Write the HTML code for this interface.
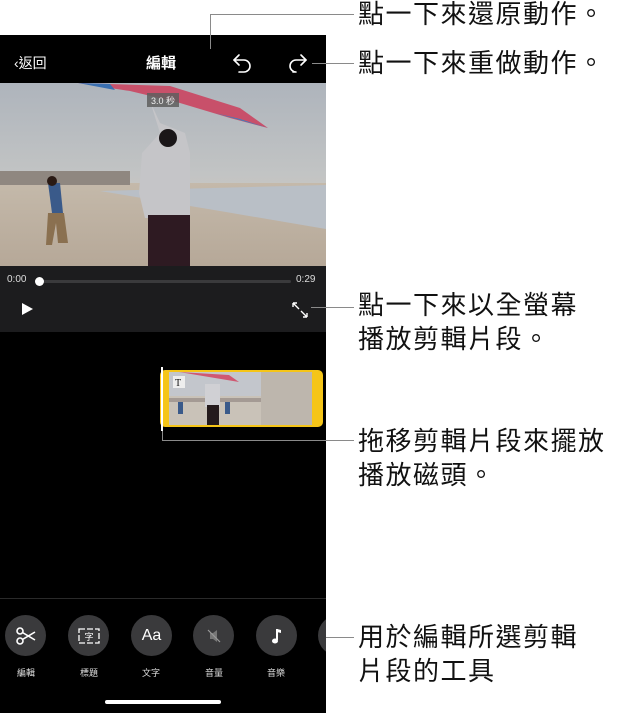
<!DOCTYPE html>
<html><head><meta charset="utf-8"><style>
*{margin:0;padding:0;box-sizing:border-box}
body{width:617px;height:713px;background:#fff;position:relative;overflow:hidden;font-family:"Liberation Sans","Noto Sans CJK TC",sans-serif}
.abs{position:absolute}
.ann{position:absolute;left:358px;font-size:26px;color:#111;line-height:34px;letter-spacing:1.5px;white-space:nowrap}
.ln{position:absolute;background:#8a8a8a}
.tool{position:absolute;top:615px;width:41px;height:41px;border-radius:50%;background:#3a3a3c;color:#fff;display:flex;align-items:center;justify-content:center}
.tl{position:absolute;top:666px;font-size:9px;color:#ddd;width:40px;text-align:center}
</style></head><body>
<div class="abs" style="left:0;top:35px;width:326px;height:678px;background:#000"></div>
<div class="abs" style="left:14px;top:53px;color:#fff;font-size:14px">‹返回</div>
<div class="abs" style="left:146px;top:52px;color:#fff;font-size:15px;font-weight:bold">編輯</div>
<svg class="abs" style="left:230px;top:50px" width="80" height="26" viewBox="0 0 80 26">
<g fill="none" stroke="#fff" stroke-width="1.6" stroke-linecap="round" stroke-linejoin="round">
<path d="M9 5 L4 10 L9 15"/><path d="M4 10 H14 a6 6 0 0 1 0 12 H9"/>
<path d="M71 5 L76 10 L71 15"/><path d="M76 10 H66 a6 6 0 0 0 0 12 H63"/>
</g></svg>
<svg class="abs" style="left:0;top:83px" width="326" height="183" viewBox="0 0 326 183">
<defs><linearGradient id="sky" x1="0" y1="0" x2="0" y2="1"><stop offset="0" stop-color="#aeb4bc"/><stop offset="0.5" stop-color="#c2c4c4"/><stop offset="1" stop-color="#e0cdb5"/></linearGradient>
<linearGradient id="sand" x1="0" y1="0" x2="0" y2="1"><stop offset="0" stop-color="#c4b9aa"/><stop offset="1" stop-color="#b6a898"/></linearGradient></defs>
<rect width="326" height="183" fill="url(#sky)"/>
<rect y="100" width="326" height="83" fill="url(#sand)"/>
<rect y="88" width="130" height="14" fill="#8f8780"/>
<path d="M100 108 L326 102 L326 146 L220 128 Z" fill="#b9bfc6"/>
<path d="M78 0 L170 3 L240 25 L268 45 L230 35 L180 20 L130 8 Z" fill="#c8506a"/>
<path d="M78 0 L110 1 L115 7 Z" fill="#3a6fb0"/>
<path d="M215 30 L268 45 L240 36 Z" fill="#3a80c0"/>
<path d="M150 18 L160 40 L185 50 L190 70 L190 135 L145 135 L139 110 L142 70 L160 50 Z" fill="#c5c5c8"/>
<circle cx="168" cy="55" r="9" fill="#1a1618"/>
<rect x="148" y="132" width="42" height="51" fill="#2e1a22"/>
<path d="M48 100 L60 100 L63 130 L52 130 Z" fill="#3a5a8a"/>
<circle cx="52" cy="98" r="5" fill="#2a1a14"/>
<path d="M48 130 L64 130 L68 160 L58 160 L56 140 L52 162 L46 162 Z" fill="#8a7050"/>
<rect x="147" y="10" width="32" height="14" fill="#5e5e5e" opacity="0.85"/>
<text x="163" y="21" fill="#eee" font-size="9" text-anchor="middle" font-family="Liberation Sans,Noto Sans CJK TC,sans-serif">3.0 秒</text>
</svg>
<div class="abs" style="left:0;top:266px;width:326px;height:66px;background:#1c1c1e"></div>
<div class="abs" style="left:7px;top:274px;color:#ddd;font-size:10px">0:00</div>
<div class="abs" style="left:296px;top:274px;color:#ddd;font-size:10px">0:29</div>
<div class="abs" style="left:40px;top:280px;width:251px;height:3px;background:#3a3a3c;border-radius:2px"></div>
<div class="abs" style="left:35px;top:277px;width:9px;height:9px;background:#fff;border-radius:50%"></div>
<div class="abs" style="left:22px;top:303px;width:0;height:0;border-left:11px solid #fff;border-top:6.5px solid transparent;border-bottom:6.5px solid transparent"></div>
<svg class="abs" style="left:291px;top:301px" width="18" height="18"><g stroke="#fff" stroke-width="1.4" fill="none"><path d="M2 2 L8 8 M2 2 H6 M2 2 V6 M16 16 L10 10 M16 16 H12 M16 16 V12"/></g></svg>
<div class="abs" style="left:160px;top:370px;width:163px;height:57px;background:#f5c518;border-radius:5px"></div>
<svg class="abs" style="left:169px;top:372px" width="143" height="53" viewBox="0 0 143 53">
<rect width="143" height="53" fill="#c9c2b8"/><rect width="143" height="24" fill="#c3c6cc"/>
<rect x="92" width="51" height="53" fill="#bdb6ad"/>
<rect y="26" width="92" height="4" fill="#a49a94"/>
<rect x="36" y="12" width="15" height="23" fill="#d0d0d4"/><rect x="38" y="33" width="12" height="20" fill="#241a1c"/>
<path d="M10 0 L60 3 L70 10 L40 5 Z" fill="#cf5872"/>
<rect x="4" y="4" width="12" height="12" fill="#eee"/><text x="6" y="14" font-size="10" font-family="Liberation Serif,serif" fill="#111">T</text>
<rect x="9" y="30" width="5" height="12" fill="#3a5a8a"/><rect x="56" y="30" width="5" height="12" fill="#3a5a8a"/>
</svg>
<div class="abs" style="left:161px;top:367px;width:2px;height:64px;background:#fff"></div>
<div class="abs" style="left:0;top:598px;width:326px;height:1px;background:#2a2a2a"></div>
<div class="tool" style="left:5px"><svg width="22" height="18" viewBox="0 0 22 18"><g stroke="#fff" stroke-width="1.6" fill="none"><circle cx="5" cy="4" r="3"/><circle cx="5" cy="14" r="3"/><path d="M7.5 5.5 L20 13 M7.5 12.5 L20 5"/></g></svg></div>
<div class="tool" style="left:68px"><svg width="22" height="16"><rect x="1" y="1" width="20" height="14" fill="none" stroke="#fff" stroke-width="1.3" stroke-dasharray="6 2"/><text x="11" y="12" font-size="9" fill="#fff" text-anchor="middle" font-family="Noto Sans CJK TC,sans-serif">字</text></svg></div>
<div class="tool" style="left:131px;font-size:16px">Aa</div>
<div class="tool" style="left:193px"><svg width="16" height="16"><path d="M4 5 H7 L11 2 V14 L7 11 H4 Z" fill="#777"/><path d="M2 2 L14 14" stroke="#999" stroke-width="1.2"/></svg></div>
<div class="tool" style="left:256px"><svg width="14" height="18"><path d="M7 2 V13" stroke="#fff" stroke-width="2"/><path d="M7 2 L11 3 V6 L7 5Z" fill="#fff"/><ellipse cx="5" cy="14" rx="3" ry="2.5" fill="#fff"/></svg></div>
<div class="tool" style="left:318px"></div>
<div class="abs" style="left:326px;top:600px;width:291px;height:113px;background:#fff"></div>
<div class="tl" style="left:6px">編輯</div><div class="tl" style="left:69px">標題</div><div class="tl" style="left:131px">文字</div><div class="tl" style="left:194px">音量</div><div class="tl" style="left:256px">音樂</div>
<div class="abs" style="left:105px;top:700px;width:116px;height:4px;background:#fff;border-radius:2px"></div>

<div class="ann" style="top:-3px">點一下來還原動作。</div>
<div class="ann" style="top:46px">點一下來重做動作。</div>
<div class="ann" style="top:288px">點一下來以全螢幕<br>播放剪輯片段。</div>
<div class="ann" style="top:424px">拖移剪輯片段來擺放<br>播放磁頭。</div>
<div class="ann" style="top:620px">用於編輯所選剪輯<br>片段的工具</div>
<div class="ln" style="left:210px;top:14px;width:1px;height:35px"></div>
<div class="ln" style="left:210px;top:14px;width:144px;height:1px"></div>
<div class="ln" style="left:312px;top:63px;width:42px;height:1px"></div>
<div class="ln" style="left:311px;top:307px;width:43px;height:1px"></div>
<div class="ln" style="left:162px;top:431px;width:1px;height:10px"></div>
<div class="ln" style="left:162px;top:440px;width:192px;height:1px"></div>
<div class="ln" style="left:326px;top:637px;width:28px;height:1px"></div>
</body></html>
